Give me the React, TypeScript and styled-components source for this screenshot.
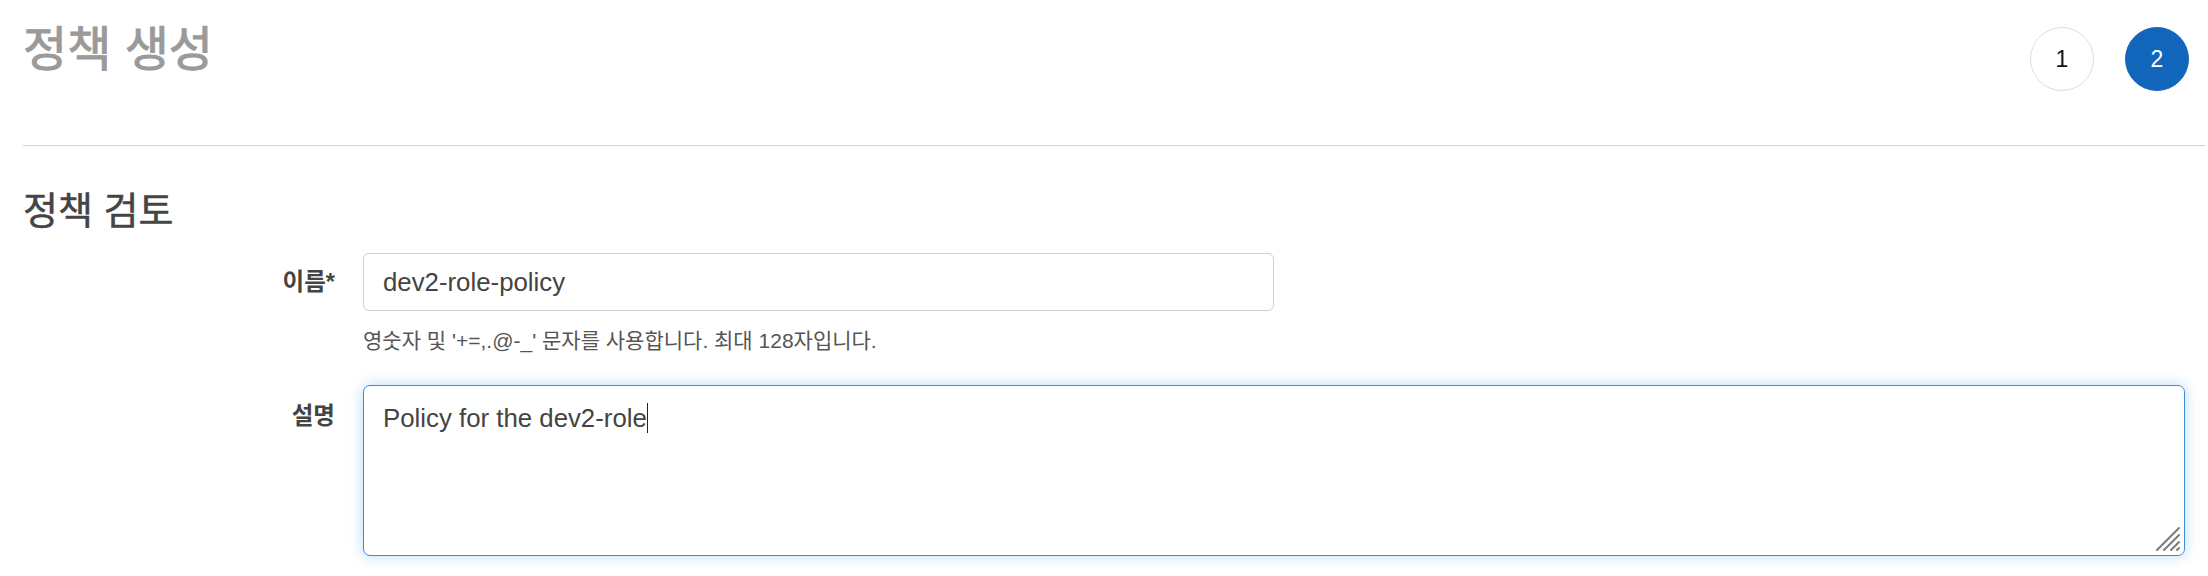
import React from "react";
import styled, { createGlobalStyle } from "styled-components";

const GlobalStyle = createGlobalStyle`
  html, body {
    margin: 0;
    padding: 0;
    background: #ffffff;
  }
  body {
    font-family: "Liberation Sans", "Noto Sans CJK KR", Arial, sans-serif;
    color: #444444;
  }
  * { box-sizing: border-box; }
`;

const Page = styled.div`
  padding: 0 3px 20px 23px;
`;

const Header = styled.header`
  display: flex;
  justify-content: space-between;
  align-items: flex-start;
  height: 146px;
  padding: 22px 16px 0 0;
  border-bottom: 1px solid #d3d3d3;
`;

const Title = styled.h1`
  margin: 0;
  font-size: 48px;
  line-height: 56px;
  font-weight: 400;
  color: #9a9a9a;
  -webkit-text-stroke: 1px #9a9a9a;
`;

const Steps = styled.div`
  display: flex;
  gap: 31px;
  margin-top: 5px;
`;

const StepCircle = styled.div<{ $active?: boolean }>`
  width: 64px;
  height: 64px;
  border-radius: 50%;
  display: flex;
  align-items: center;
  justify-content: center;
  border: 1px solid ${(p) => (p.$active ? "#1166bb" : "#dedede")};
  background: ${(p) => (p.$active ? "#1166bb" : "#ffffff")};
  color: ${(p) => (p.$active ? "#ffffff" : "#111111")};
  font-family: "Liberation Sans", Arial, sans-serif;
  font-size: 23px;
`;

const SectionTitle = styled.h2`
  margin: 43px 0 20px;
  font-size: 38px;
  line-height: 44px;
  font-weight: 400;
  color: #444444;
  -webkit-text-stroke: 0.5px #444444;
`;

const Form = styled.div`
  display: grid;
  grid-template-columns: 312px 1fr;
  column-gap: 28px;
  row-gap: 32px;
  padding-right: 20px;
`;

const Label = styled.label<{ $offset?: number }>`
  text-align: right;
  font-size: 23.5px;
  font-weight: 700;
  line-height: 58px;
  color: #444444;
  padding-top: ${(p) => p.$offset ?? 0}px;
`;

const Field = styled.div`
  display: flex;
  flex-direction: column;
`;

const TextInput = styled.input`
  width: 911px;
  height: 58px;
  padding: 0 19px;
  border: 1px solid #cfcfcf;
  border-radius: 6px;
  font-family: "Liberation Sans", Arial, sans-serif;
  font-size: 25.8px;
  color: #444444;
  background: #ffffff;
  outline: none;
`;

const Help = styled.div`
  margin-top: 18px;
  font-size: 21px;
  line-height: 24px;
  color: #555555;
`;

const TextBox = styled.div`
  position: relative;
  height: 171px;
  padding: 17px 19px;
  border: 1px solid #3c8bdc;
  border-radius: 7px;
  box-shadow: 0 0 14px rgba(102, 175, 233, 0.45);
  font-family: "Liberation Sans", Arial, sans-serif;
  font-size: 25.8px;
  line-height: 30px;
  color: #444444;
  background: #ffffff;
`;

const Caret = styled.span`
  display: inline-block;
  width: 1px;
  height: 30px;
  vertical-align: top;
  background: #222222;
`;

const Grip = styled.svg`
  position: absolute;
  right: 3px;
  bottom: 3px;
`;

export default function App() {
  return (
    <>
      <GlobalStyle />
      <Page>
        <Header>
          <Title>정책 생성</Title>
          <Steps>
            <StepCircle>1</StepCircle>
            <StepCircle $active>2</StepCircle>
          </Steps>
        </Header>
        <SectionTitle>정책 검토</SectionTitle>
        <Form>
          <Label htmlFor="policy-name">이름*</Label>
          <Field>
            <TextInput id="policy-name" defaultValue="dev2-role-policy" />
            <Help>영숫자 및 '+=,.@-_' 문자를 사용합니다. 최대 128자입니다.</Help>
          </Field>
          <Label $offset={2}>설명</Label>
          <TextBox>
            Policy for the dev2-role
            <Caret />
            <Grip width="26" height="26" viewBox="0 0 26 26">
              <g stroke="#7a7a7a" strokeWidth="2" strokeLinecap="round">
                <line x1="2" y1="24" x2="24" y2="2" />
                <line x1="9" y1="24" x2="24" y2="9" />
                <line x1="16" y1="24" x2="24" y2="16" />
                <line x1="22" y1="24" x2="24" y2="22" />
              </g>
            </Grip>
          </TextBox>
        </Form>
      </Page>
    </>
  );
}
